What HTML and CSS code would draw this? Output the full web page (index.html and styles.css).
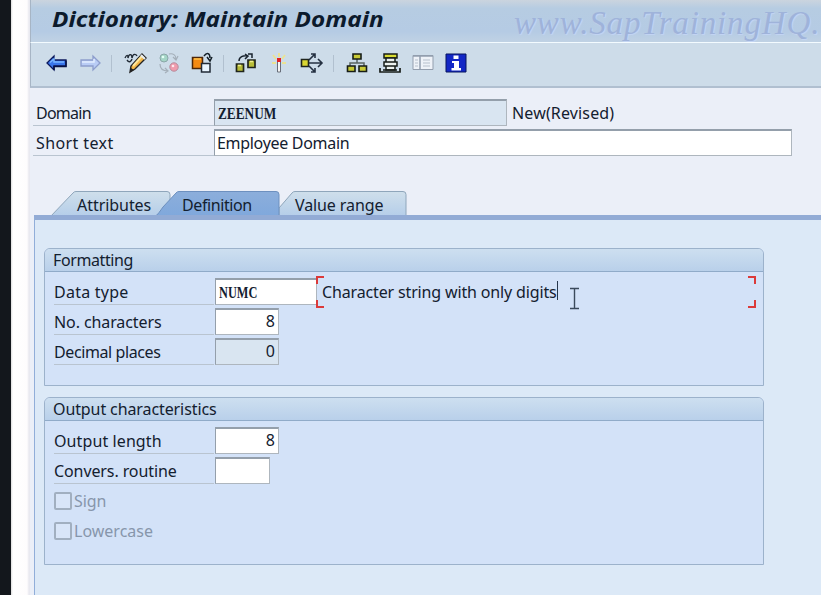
FILE: index.html
```html
<!DOCTYPE html>
<html lang="en">
<head>
<meta charset="utf-8">
<title>Dictionary: Maintain Domain</title>
<link rel="stylesheet" href="styles.css">
</head>
<body>
<div class="edge"></div>
<main class="app">
  <header class="titlebar">
    <h1>Dictionary: Maintain Domain</h1>
    <span class="watermark">www.SapTrainingHQ.</span>
  </header>
  <nav class="toolbar">
    <svg class="icon" viewBox="0 0 24 24"><path d="M2 12 9 5v4h12v6H9v4z" fill="#3975ea" stroke="#0c185c" stroke-width="1.3"/><path d="M5 11.5 9 8v3h10" fill="none" stroke="#79b5ff" stroke-width="1.5"/><path d="M21 9.500v6H9v3.500" fill="none" stroke="#071044" stroke-width="1.500"/></svg>
    <svg class="icon" viewBox="0 0 24 24"><path d="M22 12 15 5v4H3v6h12v4z" fill="#b9ccf5" stroke="#8d9dcc" stroke-width="1.300"/><path d="M4 11h12V8" fill="none" stroke="#e2edff" stroke-width="1.500"/></svg>
    <i class="sep wide"></i>
    <svg class="icon" viewBox="0 0 24 24"><path d="M1 7c2-4 3-3 3 0 1-5 4-4 4 0 1-5 4-4 5-2M3 9c2 3 4 2 5-1" fill="none" stroke="#202a35" stroke-width="1.400"/><path d="m6 21 1-6L18 3l4 4L11 18z" fill="#f3b649" stroke="#232323" stroke-width="1.400"/><path d="m9 15 9-10" stroke="#ffe79b" stroke-width="2"/><path d="m17 4 4 4" stroke="#e8eef4" stroke-width="2"/><path d="m6 21 1-4 3 2z" fill="#222"/></svg>
    <svg class="icon" viewBox="0 0 24 24"><circle cx="7" cy="7" r="4" fill="#a4d5c6" stroke="#8aa6a8"/><circle cx="17" cy="16" r="4.200" fill="#ef9cad" stroke="#b58b9c"/><circle cx="6" cy="6" r="1.300" fill="#e3fff5"/><circle cx="16" cy="15" r="1.300" fill="#ffe7ed"/><path d="M12 3c4-1 7 1 7 5m-3-2 3 3 2-4M3 13c0 5 3 7 8 7m-3-3 3 3-3 2" fill="none" stroke="#a4afb9" stroke-width="1.200"/></svg>
    <svg class="icon" viewBox="0 0 24 24"><path d="M2.500 6.500h10v11h-10z" fill="#f48a13" stroke="#4d2608" stroke-width="1.500"/><path d="M4 8h7" stroke="#ffc34c" stroke-width="1.500"/><path d="M11.500 12.500h8.500v8.500h-8.500z" fill="#e9f5ff" stroke="#202a36" stroke-width="1.500"/><path d="M14 5c3-4 6-3 6 2m-3-1 3 4 2-4" fill="none" stroke="#111c24" stroke-width="1.500"/></svg>
    <i class="sep"></i>
    <svg class="icon" viewBox="0 0 24 24"><path d="M2.500 13h7v7.500h-7zM14 9h7v7.500h-7z" fill="#b8bd39" stroke="#20251d" stroke-width="1.700"/><path d="M4 14.500h3M16 10.500h3" stroke="#f0ee8f" stroke-width="1.500"/><path d="M5 10c0-4 4-6 9-5m-3-2 3 2-3 3M14 3h4v4" fill="none" stroke="#19232e" stroke-width="1.500"/></svg>
    <svg class="icon" viewBox="0 0 24 24"><path d="m6 4 3 4m9-4-3 4M5 12h4m6 0h4M12 2v4" stroke="#ebe392" stroke-width="1.800"/><path d="M10.500 9h3v12h-3z" fill="#f5f5f5" stroke="#686e79"/><path d="M10 7h4v4h-4z" fill="#e32222"/></svg>
    <svg class="icon" viewBox="0 0 24 24"><path d="M1.500 8.500h7v7h-7z" fill="#d9d632" stroke="#20251d" stroke-width="1.600"/><path d="m9 9 6-6m-4 0h4v4M9 12h13m-4-4 4 4-4 4M9 15l6 6m-4 0h4v-4" fill="none" stroke="#243041" stroke-width="1.600"/></svg>
    <i class="sep mid"></i>
    <svg class="icon" viewBox="0 0 24 24"><path d="M12 8v4M5 15v-3h14v3" fill="none" stroke="#5b6563" stroke-width="1.500"/><path d="M8 3h8v5H8zM2.500 15H10v5.500H2.500zM14 15h7.500v5.500H14z" fill="#c8ca36" stroke="#171d18" stroke-width="1.600"/></svg>
    <svg class="icon" viewBox="0 0 24 24"><path d="M6 3h13v4H6z" fill="#d9dc30" stroke="#171d18" stroke-width="1.500"/><path d="M8 7h9v4H8zM6 11h13v4H6zM8 15h9v4H8z" fill="#edf2ef" stroke="#171d18" stroke-width="1.500"/><path d="M2 17v4h20v-4M5 19h14" fill="none" stroke="#171d18" stroke-width="1.700"/></svg>
    <svg class="icon" viewBox="0 0 24 24"><path d="M2 4.500h20v14H2z" fill="#eef2f8" stroke="#939eae"/><path d="M2 5h20M9 5v13" stroke="#939eae" stroke-width="1.500"/><path d="M4 9h3m-3 3h3m-3 3h3m5-6h7m-7 3h7m-7 3h7" stroke="#b7c0cc"/></svg>
    <svg class="icon" viewBox="0 0 24 24"><path d="M2 3h20v18H2z" fill="#1327c5" stroke="#07145f"/><path d="M9.500 4.500h5V8h-5zM8 10h7v7h2v2.500H7.500V17H10v-5H8z" fill="#fff"/></svg>
  </nav>

  <section class="head">
    <div class="row"><label class="label"><span class="s-domain">Domain</span></label><div class="field domain ro"><b class="mono">ZEENUM</b></div><span class="status">New(Revised)</span></div>
    <div class="row"><label class="label"><span class="s-short">Short text</span></label><div class="field short"><span class="s-emp">Employee Domain</span></div></div>
  </section>

  <div class="tabs">
    <svg class="tabshape" viewBox="0 0 374 26">
      <defs>
        <linearGradient id="tab" x2="0" y2="1"><stop offset="0" stop-color="#cfdfeb"/><stop offset="1" stop-color="#b4cde9"/></linearGradient>
        <linearGradient id="on" x2="0" y2="1"><stop offset="0" stop-color="#8caedb"/><stop offset="1" stop-color="#7fa8dc"/></linearGradient>
      </defs>
      <path d="M16 26 39 2q1-1.500 3-1.500h91q3 0 3 3V26z" fill="url(#tab)" stroke="#8fa6bb"/>
      <path d="M245 26v-9L258 2q1-1.500 3-1.500h108q3 0 3 3V26z" fill="url(#tab)" stroke="#8fa6bb"/>
      <path d="M120 26c4-2 6-6 9-10l13-14q1-1.500 3-1.500h97q3 0 3 3V26z" fill="url(#on)" stroke="#6d90bf"/>
    </svg>
    <div class="tabnames"><span class="t1">Attributes</span><span class="t2">Definition</span><span class="t3">Value range</span></div>
  </div>

  <section class="panel">
    <fieldset class="group first">
      <div class="caption s-fmt">Formatting</div>
      <div class="rows">
        <div class="row"><label class="label s-type">Data type</label><div class="field type"><b class="mono">NUMC</b></div>
          <div class="focus"><span class="desc">Character string with only digits</span><i class="caret"></i>
            <svg class="ibeam" viewBox="0 0 11 23"><path d="M1 1.500h9M1 21.500h9M5.500 2v19" fill="none" stroke="#3b4a5c" stroke-width="1.400"/></svg>
            <i class="corner tl"></i><i class="corner tr"></i><i class="corner bl"></i><i class="corner br"></i>
          </div>
        </div>
        <div class="row"><label class="label s-chars">No. characters</label><div class="field num">8</div></div>
        <div class="row"><label class="label s-dec">Decimal places</label><div class="field num ro">0</div></div>
      </div>
    </fieldset>
    <fieldset class="group second">
      <div class="caption s-out">Output characteristics</div>
      <div class="rows">
        <div class="row"><label class="label s-len">Output length</label><div class="field num">8</div></div>
        <div class="row"><label class="label s-conv">Convers. routine</label><div class="field conv"></div></div>
        <div class="check"><i class="box"></i><span class="s-sign">Sign</span></div>
        <div class="check"><i class="box"></i><span>Lowercase</span></div>
      </div>
    </fieldset>
  </section>
</main>
</body>
</html>
```
FILE: styles.css
```css
* { box-sizing: border-box; }
body {
  margin: 0;
  width: 821px;
  height: 595px;
  overflow: hidden;
  display: flex;
  background: #13171c;
  font: 16px/20px "Noto Sans", "Open Sans", sans-serif;
  color: #13202f;
}
.edge { width: 19px; margin-left: 11px; background: linear-gradient(90deg, #ddd 0, #fff 2px, #fefcfd 16px, #e9e9f0 18px); }
.app { width: 791px; display: flex; flex-direction: column; background: #ebeff8; }

.titlebar {
  height: 43px;
  display: flex;
  justify-content: space-between;
  overflow: hidden;
  white-space: nowrap;
  border-left: 1px solid #a7b5c5;
  border-bottom: 1px solid #f3fbff;
  background: linear-gradient(#cbd4de, #b6cce2 20%, #b5cbe4 75%, #c0d2e4);
}
h1 { margin: 5px 0 0 21px; font: italic bold 22px/26px "Noto Sans", sans-serif; transform: scaleX(1.105); transform-origin: 0 0; color: #0c1a2c; }
.watermark { width: 307px; padding-top: 6px; font: italic 33px/34px "Liberation Serif", serif; letter-spacing: .85px; color: #9fb3da; text-shadow: 1px 1px 1px #c4d5f5; }

.toolbar {
  height: 45px;
  padding: 8px 0 0 14px;
  display: flex;
  gap: 9px;
  border-left: 1px solid #a7b5c5;
  border-bottom: 2px solid #b0bfd0;
  background: #cddce9;
}
.icon { width: 24px; height: 24px; flex: none; }
.sep { width: 2px; height: 17px; margin-top: 4px; border-left: 1px solid #b1c0cf; }
.sep.wide { width: 4px; }
.sep.mid { width: 3px; }

.head { padding: 11px 0 0 3px; }
.row { display: flex; height: 27px; margin-bottom: 3px; white-space: nowrap; }
.label { width: 181px; margin-right: 1px; padding-top: 3px; padding-left: 3px; border-bottom: 1px solid #b9c4d0; }
.field { height: 27px; padding: 2px 3px; border: 1px solid #aeb6be; border-top: 2px solid #949fab; border-left-color: #949fab; background: #fff; line-height: 20px; }
.ro { background: #d9e5f1; }
.mono { display: inline-block; font: bold 16px/19px "Liberation Serif", serif; transform: scaleX(.83); transform-origin: 0 0; }
.type .mono { transform: scaleX(.77); }
.head .field { margin-left: -1px; }
.domain { width: 293px; }
.short { width: 578px; padding-left: 2px; }
.status { padding: 4px 0 0 5px; letter-spacing: .15px; }

.tabs { height: 24px; margin: 32px 0 0 4px; position: relative; }
.tabshape { position: absolute; left: 0; top: 0; width: 374px; height: 26px; }
.tabnames { position: relative; display: flex; padding-top: 4px; white-space: nowrap; }
.t1 { width: 105px; margin-left: 43px; letter-spacing: -.05px; }
.t2 { width: 113px; letter-spacing: -.4px; }
.t3 { letter-spacing: -.1px; }

.panel { position: relative; flex: 1; margin-left: 4px; padding: 28px 0 0 9px; border-top: 5px solid #92abd5; border-left: 1px solid #91aed9; background: #dce9f7; }
.group { width: 720px; margin: 0; padding: 0; border: 1px solid #9cb2cb; border-radius: 6px 6px 0 0; background: #d3e2f8; }
.first { height: 138px; margin-bottom: 11px; }
.second { height: 168px; }
.caption { height: 23px; padding: 1px 0 0 8px; border-bottom: 1px solid #90abc9; border-radius: 5px 5px 0 0; background: linear-gradient(#cddff0, #b9d0ea); }
.rows { padding: 6px 0 0 9px; }
.rows .label { width: 160px; margin-right: 1px; padding-left: 0; padding-top: 4px; }
.type { width: 102px; }
.num { width: 64px; text-align: right; padding-right: 3px; padding-top: 1px; }
.conv { width: 55px; }

.focus { position: relative; width: 437px; height: 32px; margin: -2px 0 0 -1px; padding: 6px 0 0 6px; display: flex; }
.desc { letter-spacing: -.15px; }
.caret { width: 1px; height: 19px; margin-top: -1px; background: #26364c; }
.ibeam { position: absolute; left: 253px; top: 11px; width: 11px; height: 23px; }
.corner { position: absolute; width: 8px; height: 8px; border: 0 solid #db3a3a; }
.tl { left: 0; top: 0; border-width: 2px 0 0 2px; }
.tr { right: -3px; top: 0; border-width: 2px 2px 0 0; }
.bl { left: 0; bottom: 0; border-width: 0 0 2px 2px; }
.br { right: -3px; bottom: 0; border-width: 0 2px 2px 0; }

.check { display: flex; height: 30px; padding-top: 5px; color: #8796ab; }
.box { width: 18px; height: 18px; margin-right: 2px; border: 2px solid #a1afc0; border-radius: 2px; background: #d8e5f8; }
.check span { line-height: 18px; }

.s-domain { position: relative; top: 1px; letter-spacing: -.75px; }
.s-short { position: relative; top: 1px; letter-spacing: .4px; }
.s-emp { letter-spacing: -.3px; }
.s-fmt { letter-spacing: -.4px; }
.s-type { letter-spacing: .25px; }
.s-chars { letter-spacing: -.1px; }
.s-dec { letter-spacing: -.4px; }
.s-out { letter-spacing: -.1px; }
.s-len { letter-spacing: .1px; }
.s-conv { letter-spacing: -.1px; }
.s-sign { letter-spacing: -.1px; }
```
